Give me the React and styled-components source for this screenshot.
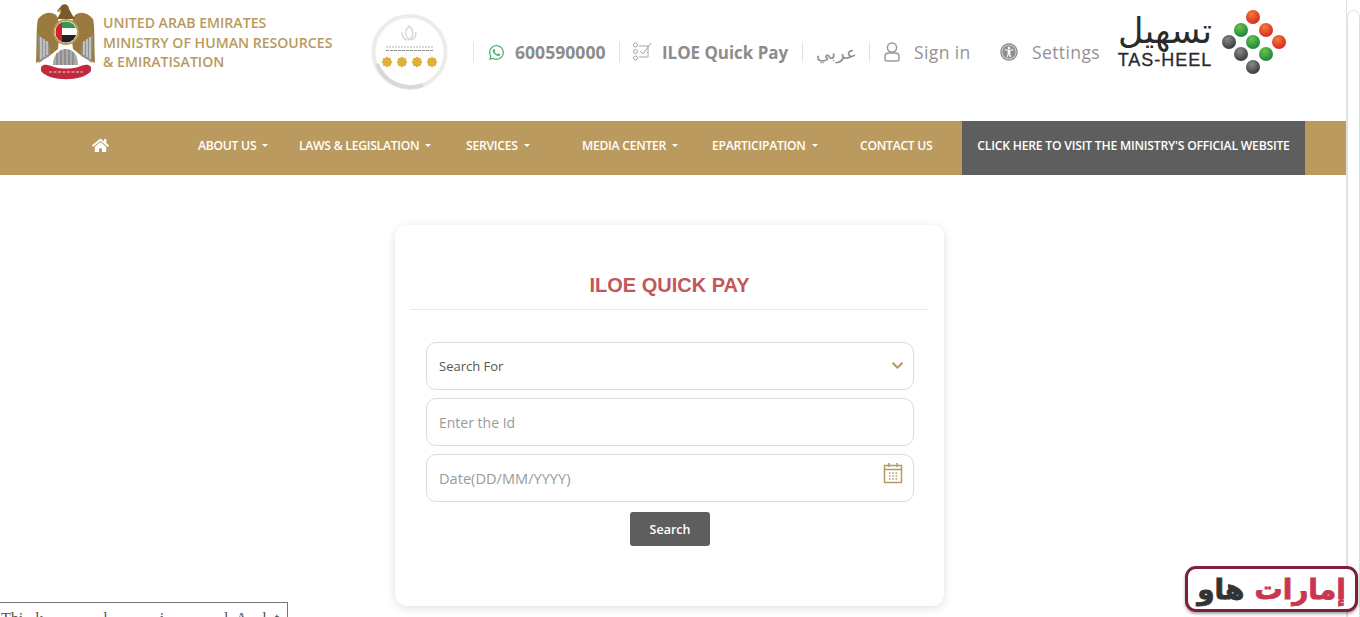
import React from 'react';
import styled, { createGlobalStyle } from 'styled-components';
import { FaWhatsapp, FaHome, FaUniversalAccess, FaChevronDown } from 'react-icons/fa';

const Global = createGlobalStyle`
  html, body { margin: 0; padding: 0; background: #fff; overflow: hidden; }
  #root { height: 617px; }
  * { box-sizing: border-box; }
`;

const Shell = styled.div`
  position: relative;
  display: flex;
  width: 1360px;
  height: 617px;
  overflow: hidden;
  font-family: "Open Sans", "DejaVu Sans", sans-serif;
`;
const Page = styled.div`
  width: 1346px;
  display: flex;
  flex-direction: column;
`;
const ScrollTrack = styled.div`
  width: 14px;
  padding-top: 10px;
  border-left: 1px solid #e2e2e2;
`;
const ScrollThumb = styled.div`
  height: 640px;
  border: 1px solid #dedede;
  border-radius: 7px;
  background: #fff;
`;

const Header = styled.header`
  height: 121px;
  display: flex;
  align-items: flex-start;
  padding: 3px 0 0 36px;
`;
const Brand = styled.div`
  display: flex;
  gap: 7px;
  width: 335px;
`;
const BrandText = styled.div`
  margin-top: 10px;
  color: #b79a60;
  font-size: 14.1px;
  font-weight: 600;
  line-height: 19.5px;
  white-space: nowrap;
`;
const Badge = styled.div`
  width: 77px;
  height: 80px;
  margin-top: 9px;
  margin-right: 25px;
`;
const Toolbar = styled.div`
  display: flex;
  align-items: center;
  height: 22px;
  margin-top: 38px;
`;
const ToolItem = styled.div`
  display: flex;
  align-items: center;
  gap: ${p => p.$gap || 10}px;
  width: ${p => (p.$w ? `${p.$w}px` : 'auto')};
  height: 20px;
  padding: 0 0 0 ${p => p.$pl ?? 15}px;
  border-left: ${p => (p.$plain ? 'none' : '1px solid #e4e4e4')};
  color: #8b8b8b;
  white-space: nowrap;
`;
const Strong = styled.span`
  font-size: ${p => p.$size}px;
  font-weight: 700;
  color: #8c8c8c;
`;
const Light = styled.span`
  font-size: 17.5px;
  color: #939393;
  letter-spacing: 0.4px;
`;
const Arabic = styled.span`
  font-family: "DejaVu Sans", sans-serif;
  font-size: 18px;
  color: #8f8f8f;
`;
const Tasheel = styled.div`
  display: flex;
  margin-top: 12px;
`;
const TasheelWords = styled.div`
  width: 96px;
  display: flex;
  flex-direction: column;
  align-items: center;
  color: #2a2a2a;
`;
const TasheelArabic = styled.span`
  font-family: "DejaVu Sans", sans-serif;
  font-size: 35px;
  line-height: 32px;
  white-space: nowrap;
`;
const TasheelLatin = styled.span`
  margin-top: 3px;
  font-family: "Liberation Sans", sans-serif;
  font-size: 18px;
  line-height: 20px;
  letter-spacing: 1px;
  white-space: nowrap;
  -webkit-text-stroke: 0.3px #2a2a2a;
`;
const Dots = styled.svg`
  width: 68px;
  height: 68px;
  margin-left: 7px;
  margin-top: -7px;
`;

const Nav = styled.nav`
  height: 54px;
  display: flex;
  background: #bb9a60;
`;
const NavItem = styled.a`
  display: flex;
  align-items: center;
  width: ${p => p.$w}px;
  padding-bottom: 6px;
  color: #fff;
  font-size: 12.2px;
  font-weight: 600;
  letter-spacing: -0.28px;
  white-space: nowrap;
`;
const HomeItem = styled(NavItem)`
  justify-content: center;
  padding-left: 2px;
  font-size: 17px;
`;
const Caret = styled.i`
  width: 0;
  height: 0;
  margin-left: 6px;
  border-left: 3px solid transparent;
  border-right: 3px solid transparent;
  border-top: 3px solid #fff;
`;
const OfficialLink = styled.a`
  width: 343px;
  display: flex;
  align-items: center;
  justify-content: center;
  padding-bottom: 6px;
  background: #5e5e5e;
  color: #fff;
  font-size: 12.2px;
  font-weight: 600;
  letter-spacing: -0.22px;
  white-space: nowrap;
`;

const Main = styled.main`
  padding: 50px 0 0 395px;
`;
const Card = styled.section`
  width: 549px;
  height: 381px;
  padding: 0 15px;
  border-radius: 12px;
  background: #fff;
  box-shadow: 0 2px 10px rgba(0, 0, 0, 0.13);
`;
const Title = styled.h2`
  margin: 0;
  height: 85px;
  padding-top: 47px;
  border-bottom: 1px solid #e8e8e8;
  color: #c0585b;
  font-family: "Liberation Sans", sans-serif;
  font-size: 20px;
  line-height: 26px;
  font-weight: 700;
  text-align: center;
`;
const Form = styled.form`
  display: flex;
  flex-direction: column;
  gap: 8px;
  padding: 32px 15px 0 16px;
`;
const Field = styled.div`
  position: relative;
  height: 48px;
`;
const fieldCss = `
  width: 100%;
  height: 100%;
  padding: 0 40px 0 12px;
  border: 1px solid #dcdcdc;
  border-radius: 10px;
  background: #fff;
  font-family: "Open Sans", sans-serif;
  outline: none;
  appearance: none;
`;
const Select = styled.select`
  ${fieldCss}
  font-size: 13px;
  color: #555;
`;
const Input = styled.input`
  ${fieldCss}
  font-size: ${p => p.$size}px;
  color: #555;
  &::placeholder { color: #9a9a9a; opacity: 1; }
`;
const FieldIcon = styled.span`
  position: absolute;
  right: ${p => p.$r}px;
  top: ${p => p.$t}px;
  display: flex;
  color: #b79a60;
  font-size: 13px;
  stroke: #b79a60;
  stroke-width: 30px;
`;
const SearchButton = styled.button`
  align-self: center;
  width: 80px;
  height: 34px;
  margin-top: 2px;
  border: none;
  border-radius: 3px;
  background: #5e5e5e;
  color: #fff;
  font-family: "Open Sans", sans-serif;
  font-size: 12.5px;
  font-weight: 600;
`;

const ClippedBox = styled.div`
  position: absolute;
  left: -1px;
  top: 602px;
  width: 289px;
  height: 30px;
  padding: 7px 0 0 1px;
  border: 1px solid #777;
  background: #fff;
  color: #555;
  font-family: "Liberation Serif", serif;
  font-size: 16px;
  line-height: 18px;
  white-space: pre;
`;
const Watermark = styled.div`
  position: absolute;
  left: 1185px;
  top: 566px;
  width: 173px;
  height: 46px;
  display: flex;
  align-items: center;
  justify-content: center;
  gap: 10px;
  direction: rtl;
  border: 3px solid #7c2039;
  border-radius: 11px;
  background: #fff;
  box-shadow: 0 2px 3px rgba(0, 0, 0, 0.35);
  font-family: "DejaVu Sans", sans-serif;
  font-size: 28px;
  font-weight: 700;
  white-space: nowrap;
`;
const Crimson = styled.span`
  color: #c8374f;
  -webkit-text-stroke: 0.8px #c8374f;
`;
const Ink = styled.span`
  color: #333;
  -webkit-text-stroke: 0.8px #333;
`;

const Emblem = () => (
  <svg width="60" height="78" viewBox="0 0 60 78">
    <path d="M0 60 C1 40 0 24 2 16 C8 9 14 8 20 12 C24 16 24 30 22 46 L12 54 Z" fill="#9a7a3e" />
    <path d="M59 60 C58 40 59 24 57 16 C51 9 45 8 39 12 C35 16 35 30 37 46 L47 54 Z" fill="#9a7a3e" />
    <path d="M2 32 L13 40 L14 52 L3 60 Z" fill="#8f9290" />
    <path d="M57 32 L46 40 L45 52 L56 60 Z" fill="#8f9290" />
    <path d="M5 34 V56 M8 36 V54 M11 38 V52 M54 34 V56 M51 36 V54 M48 38 V52" stroke="#eee" strokeWidth="1" />
    <path d="M21 8 L26 2 C30 0 33 3 33 6 C35 10 37 13 39 16 L21 16 L25 9 Z" fill="#7a5c2a" />
    <path d="M21 8 L25 6 L25 10 Z" fill="#c9a24f" />
    <circle cx="30" cy="29" r="13" fill="#b89a5a" />
    <circle cx="30" cy="29" r="11" fill="#fff" />
    <clipPath id="flagClip"><circle cx="30" cy="29" r="10.5" /></clipPath>
    <g clipPath="url(#flagClip)">
      <rect x="19" y="18" width="22" height="7" fill="#2f9a55" />
      <rect x="19" y="25" width="22" height="7" fill="#fff" />
      <rect x="19" y="32" width="22" height="8" fill="#222" />
      <rect x="19" y="18" width="7" height="22" fill="#d2232a" />
    </g>
    <path d="M17 62 C17 52 23 46 30 46 C37 46 42 52 42 62 Z" fill="#a9aba8" />
    <path d="M21 50 V62 M25 47 V62 M29 46 V62 M33 47 V62 M37 49 V62" stroke="#666" strokeWidth="0.8" />
    <path d="M5 64 C8 60 13 62 18 64 C25 66 35 66 42 64 C47 62 52 60 55 64 L55 68 C47 79 13 79 5 68 Z" fill="#c02a3c" />
    <path d="M13 69 H47" stroke="#f3c9cd" strokeWidth="1.2" strokeDasharray="3 1.5" />
  </svg>
);

const Star = ({ x }) => (
  <g transform={`translate(${x} 50)`} fill="#dcb23a">
    <rect x="-4" y="-4" width="8" height="8" rx="1" />
    <rect x="-4" y="-4" width="8" height="8" rx="1" transform="rotate(45)" />
  </g>
);

const AwardBadge = () => (
  <svg width="77" height="80" viewBox="0 0 77 80">
    <circle cx="38.5" cy="40" r="36" fill="#fff" stroke="#ecece8" strokeWidth="4" />
    <path d="M6 52 A36 36 0 0 0 52 73" fill="none" stroke="#d8d9d5" strokeWidth="4" />
    <path d="M38 14 C34 18 33 22 38 28 C43 24 43 18 38 14 Z M31 20 C31 25 33 27 36 28 M45 20 C45 25 43 27 40 28" fill="none" stroke="#d2d6cf" strokeWidth="1.4" />
    <path d="M15 35 H62" stroke="#b0b0b0" strokeWidth="1" strokeDasharray="2 1" />
    <path d="M15 38.5 H62" stroke="#8b8b8b" strokeWidth="1" strokeDasharray="3 1" />
    <Star x={16} /><Star x={31} /><Star x={46} /><Star x={61} />
  </svg>
);

const QuickPayIcon = () => (
  <svg width="19" height="20" viewBox="0 0 19 20" fill="none" stroke="#a6a6a6" strokeWidth="1">
    <circle cx="2.5" cy="3" r="2" />
    <circle cx="2.5" cy="9.5" r="2" />
    <circle cx="2.5" cy="16" r="2" />
    <path d="M6 4 H15 V15 H6" />
    <path d="M7 9 L10 12 L18 1" />
  </svg>
);

const UserIcon = () => (
  <svg width="16" height="20" viewBox="0 0 16 20" fill="none" stroke="#9a9a9a" strokeWidth="1.5">
    <circle cx="8" cy="5.6" r="4.6" />
    <path d="M4.5 11 H11.5 C13.6 11 15 12.6 15 14.6 V17 C15 18 14.2 19 13 19 H3 C1.8 19 1 18 1 17 V14.6 C1 12.6 2.4 11 4.5 11 Z" />
  </svg>
);

const CalendarIcon = () => (
  <svg width="20" height="22" viewBox="0 0 20 22" fill="none" stroke="#b79a60" strokeWidth="1.5">
    <rect x="1.5" y="3.5" width="17" height="17" />
    <path d="M1.5 7.5 H18.5 M6 1 V5 M14 1 V5" />
    <path d="M6 11 H7.5 M9.3 11 H10.8 M12.6 11 H14.1 M6 14 H7.5 M9.3 14 H10.8 M12.6 14 H14.1 M6 17 H7.5 M9.3 17 H10.8 M12.6 17 H14.1" strokeWidth="1.3" />
  </svg>
);

const dots = [
  ['r', 33, 9], ['r', 46, 22], ['r', 59, 34],
  ['g', 21, 22], ['g', 33, 34], ['g', 46, 46],
  ['k', 9, 34], ['k', 21, 46], ['k', 33, 59],
];

const TasheelDots = () => (
  <Dots viewBox="0 0 68 68">
    <defs>
      <radialGradient id="r" cx="0.4" cy="0.3" r="0.8"><stop offset="0" stopColor="#f47a3a" /><stop offset="1" stopColor="#d21f1b" /></radialGradient>
      <radialGradient id="g" cx="0.4" cy="0.3" r="0.8"><stop offset="0" stopColor="#6cc24a" /><stop offset="1" stopColor="#0f7f3a" /></radialGradient>
      <radialGradient id="k" cx="0.4" cy="0.3" r="0.8"><stop offset="0" stopColor="#8a8a8a" /><stop offset="1" stopColor="#303030" /></radialGradient>
    </defs>
    {dots.map(([c, x, y]) => <circle key={`${x}-${y}`} cx={x} cy={y} r="7" fill={`url(#${c})`} />)}
  </Dots>
);

const menu = [
  { label: 'ABOUT US', w: 101, caret: true },
  { label: 'LAWS & LEGISLATION', w: 167, caret: true },
  { label: 'SERVICES', w: 116, caret: true },
  { label: 'MEDIA CENTER', w: 130, caret: true },
  { label: 'EPARTICIPATION', w: 148, caret: true },
  { label: 'CONTACT US', w: 102 },
];

export default function App() {
  return (
    <Shell>
      <Global />
      <Page>
        <Header>
          <Brand>
            <Emblem />
            <BrandText>
              UNITED ARAB EMIRATES<br />
              MINISTRY OF HUMAN RESOURCES<br />
              &amp; EMIRATISATION
            </BrandText>
          </Brand>
          <Badge><AwardBadge /></Badge>
          <Toolbar>
            <ToolItem $w={146} $pl={14}>
              <FaWhatsapp size={17} color="#4fb06b" />
              <Strong $size={17.6}>600590000</Strong>
            </ToolItem>
            <ToolItem $w={183} $pl={13} $gap={10}>
              <QuickPayIcon />
              <Strong $size={16.9}>ILOE Quick Pay</Strong>
            </ToolItem>
            <ToolItem $w={67} $pl={13}>
              <Arabic>عربي</Arabic>
            </ToolItem>
            <ToolItem $w={131} $pl={14} $gap={14}>
              <UserIcon />
              <Light>Sign in</Light>
            </ToolItem>
            <ToolItem $w={117} $plain $pl={0} $gap={14}>
              <FaUniversalAccess size={18} color="#8e8e8e" />
              <Light>Settings</Light>
            </ToolItem>
          </Toolbar>
          <Tasheel>
            <TasheelWords>
              <TasheelArabic>تسهيل</TasheelArabic>
              <TasheelLatin>TAS-HEEL</TasheelLatin>
            </TasheelWords>
            <TasheelDots />
          </Tasheel>
        </Header>
        <Nav>
          <HomeItem $w={198}><FaHome /></HomeItem>
          {menu.map(m => (
            <NavItem key={m.label} $w={m.w}>
              {m.label}
              {m.caret && <Caret />}
            </NavItem>
          ))}
          <OfficialLink>CLICK HERE TO VISIT THE MINISTRY'S OFFICIAL WEBSITE</OfficialLink>
        </Nav>
        <Main>
          <Card>
            <Title>ILOE QUICK PAY</Title>
            <Form>
              <Field>
                <Select defaultValue="">
                  <option value="">Search For</option>
                </Select>
                <FieldIcon $r={10} $t={17}><FaChevronDown /></FieldIcon>
              </Field>
              <Field>
                <Input $size={14} placeholder="Enter the Id" />
              </Field>
              <Field>
                <Input $size={14.6} placeholder="Date(DD/MM/YYYY)" />
                <FieldIcon $r={11} $t={8}><CalendarIcon /></FieldIcon>
              </Field>
              <SearchButton type="button">Search</SearchButton>
            </Form>
          </Card>
        </Main>
      </Page>
      <ScrollTrack><ScrollThumb /></ScrollTrack>
      <ClippedBox>{'Thi   k               l             i               l  A    l  t'}</ClippedBox>
      <Watermark>
        <Crimson>إمارات</Crimson>
        <Ink>هاو</Ink>
      </Watermark>
    </Shell>
  );
}
